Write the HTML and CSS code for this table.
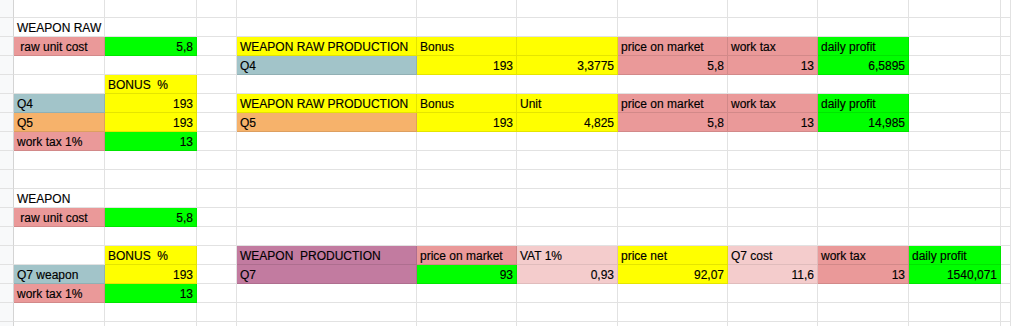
FILE: index.html
```html
<!DOCTYPE html>
<html>
<head>
<meta charset="utf-8">
<link rel="stylesheet" href="styles.css">
</head>
<body>
<div class="sheet">
  <!-- row 0 -->
  <div class="c h"></div><div class="c"></div><div class="c"></div><div class="c"></div><div class="c"></div><div class="c"></div><div class="c"></div><div class="c"></div><div class="c"></div><div class="c"></div><div class="c"></div><div class="c"></div>
  <!-- row 1 -->
  <div class="c h"></div><div class="c">WEAPON RAW</div><div class="c"></div><div class="c"></div><div class="c"></div><div class="c"></div><div class="c"></div><div class="c"></div><div class="c"></div><div class="c"></div><div class="c"></div><div class="c"></div>
  <!-- row 2 -->
  <div class="c h"></div><div class="c pink">&nbsp;raw unit cost</div><div class="c green n">5,8</div><div class="c"></div><div class="c yellow">WEAPON RAW PRODUCTION</div><div class="c yellow">Bonus</div><div class="c yellow"></div><div class="c pink">price on market</div><div class="c pink">work tax</div><div class="c green">daily profit</div><div class="c"></div><div class="c"></div>
  <!-- row 3 -->
  <div class="c h"></div><div class="c"></div><div class="c"></div><div class="c"></div><div class="c blue">Q4</div><div class="c yellow n">193</div><div class="c yellow n">3,3775</div><div class="c pink n">5,8</div><div class="c pink n">13</div><div class="c green n">6,5895</div><div class="c"></div><div class="c"></div>
  <!-- row 4 -->
  <div class="c h"></div><div class="c"></div><div class="c yellow">BONUS&nbsp; %</div><div class="c"></div><div class="c"></div><div class="c"></div><div class="c"></div><div class="c"></div><div class="c"></div><div class="c"></div><div class="c"></div><div class="c"></div>
  <!-- row 5 -->
  <div class="c h"></div><div class="c blue">Q4</div><div class="c yellow n">193</div><div class="c"></div><div class="c yellow">WEAPON RAW PRODUCTION</div><div class="c yellow">Bonus</div><div class="c yellow">Unit</div><div class="c pink">price on market</div><div class="c pink">work tax</div><div class="c green">daily profit</div><div class="c"></div><div class="c"></div>
  <!-- row 6 -->
  <div class="c h"></div><div class="c orange">Q5</div><div class="c yellow n">193</div><div class="c"></div><div class="c orange">Q5</div><div class="c yellow n">193</div><div class="c yellow n">4,825</div><div class="c pink n">5,8</div><div class="c pink n">13</div><div class="c green n">14,985</div><div class="c"></div><div class="c"></div>
  <!-- row 7 -->
  <div class="c h"></div><div class="c pink">work tax 1%</div><div class="c green n">13</div><div class="c"></div><div class="c"></div><div class="c"></div><div class="c"></div><div class="c"></div><div class="c"></div><div class="c"></div><div class="c"></div><div class="c"></div>
  <!-- row 8 -->
  <div class="c h"></div><div class="c"></div><div class="c"></div><div class="c"></div><div class="c"></div><div class="c"></div><div class="c"></div><div class="c"></div><div class="c"></div><div class="c"></div><div class="c"></div><div class="c"></div>
  <!-- row 9 -->
  <div class="c h"></div><div class="c"></div><div class="c"></div><div class="c"></div><div class="c"></div><div class="c"></div><div class="c"></div><div class="c"></div><div class="c"></div><div class="c"></div><div class="c"></div><div class="c"></div>
  <!-- row 10 -->
  <div class="c h"></div><div class="c">WEAPON</div><div class="c"></div><div class="c"></div><div class="c"></div><div class="c"></div><div class="c"></div><div class="c"></div><div class="c"></div><div class="c"></div><div class="c"></div><div class="c"></div>
  <!-- row 11 -->
  <div class="c h"></div><div class="c pink">&nbsp;raw unit cost</div><div class="c green n">5,8</div><div class="c"></div><div class="c"></div><div class="c"></div><div class="c"></div><div class="c"></div><div class="c"></div><div class="c"></div><div class="c"></div><div class="c"></div>
  <!-- row 12 -->
  <div class="c h"></div><div class="c"></div><div class="c"></div><div class="c"></div><div class="c"></div><div class="c"></div><div class="c"></div><div class="c"></div><div class="c"></div><div class="c"></div><div class="c"></div><div class="c"></div>
  <!-- row 13 -->
  <div class="c h"></div><div class="c"></div><div class="c yellow">BONUS&nbsp; %</div><div class="c"></div><div class="c mauve">WEAPON&nbsp; PRODUCTION</div><div class="c pink">price on market</div><div class="c lpink">VAT 1%</div><div class="c yellow">price net</div><div class="c lpink">Q7 cost</div><div class="c pink">work tax</div><div class="c green">daily profit</div><div class="c"></div>
  <!-- row 14 -->
  <div class="c h"></div><div class="c blue">Q7 weapon</div><div class="c yellow n">193</div><div class="c"></div><div class="c mauve">Q7</div><div class="c green n">93</div><div class="c lpink n">0,93</div><div class="c yellow n">92,07</div><div class="c lpink n">11,6</div><div class="c pink n">13</div><div class="c green n">1540,071</div><div class="c"></div>
  <!-- row 15 -->
  <div class="c h"></div><div class="c pink">work tax 1%</div><div class="c green n">13</div><div class="c"></div><div class="c"></div><div class="c"></div><div class="c"></div><div class="c"></div><div class="c"></div><div class="c"></div><div class="c"></div><div class="c"></div>
  <!-- row 16 -->
  <div class="c h"></div><div class="c"></div><div class="c"></div><div class="c"></div><div class="c"></div><div class="c"></div><div class="c"></div><div class="c"></div><div class="c"></div><div class="c"></div><div class="c"></div><div class="c"></div>
  <!-- row 17 -->
  <div class="c h"></div><div class="c"></div><div class="c"></div><div class="c"></div><div class="c"></div><div class="c"></div><div class="c"></div><div class="c"></div><div class="c"></div><div class="c"></div><div class="c"></div><div class="c"></div>
</div>
</body>
</html>
```

FILE: styles.css
```css
html, body {
  margin: 0;
  padding: 0;
  background: #ffffff;
}

.sheet {
  display: grid;
  grid-template-columns: 14px 91px 92px 40px 180px 100px 101px 110px 90px 91px 92px 1fr;
  grid-template-rows: 18px repeat(17, 19px);
  width: 1011px;
  height: 326px;
  overflow: hidden;
  font-family: "Liberation Sans", Arial, sans-serif;
  font-size: 12px;
  color: #000000;
}

.c {
  box-sizing: border-box;
  border-right: 1px solid #e2e2e2;
  border-bottom: 1px solid #e2e2e2;
  padding: 1px 3px 0;
  line-height: 18px;
  white-space: nowrap;
  overflow: visible;
  -webkit-text-stroke: 0.15px #000000;
}

.h {
  background: #f8f9fa;
  border-right-color: #d4d4d4;
}

.n {
  text-align: right;
}

.yellow { background: #ffff00; border-color: rgba(0, 0, 0, 0.1); }
.green  { background: #00ff00; border-color: rgba(0, 0, 0, 0.1); }
.pink   { background: #ea9999; border-color: rgba(0, 0, 0, 0.1); }
.lpink  { background: #f4cccc; border-color: rgba(0, 0, 0, 0.08); }
.blue   { background: #a2c4c9; border-color: rgba(0, 0, 0, 0.1); }
.orange { background: #f6b26b; border-color: rgba(0, 0, 0, 0.1); }
.mauve  { background: #c27ba0; border-color: rgba(0, 0, 0, 0.1); }
```
